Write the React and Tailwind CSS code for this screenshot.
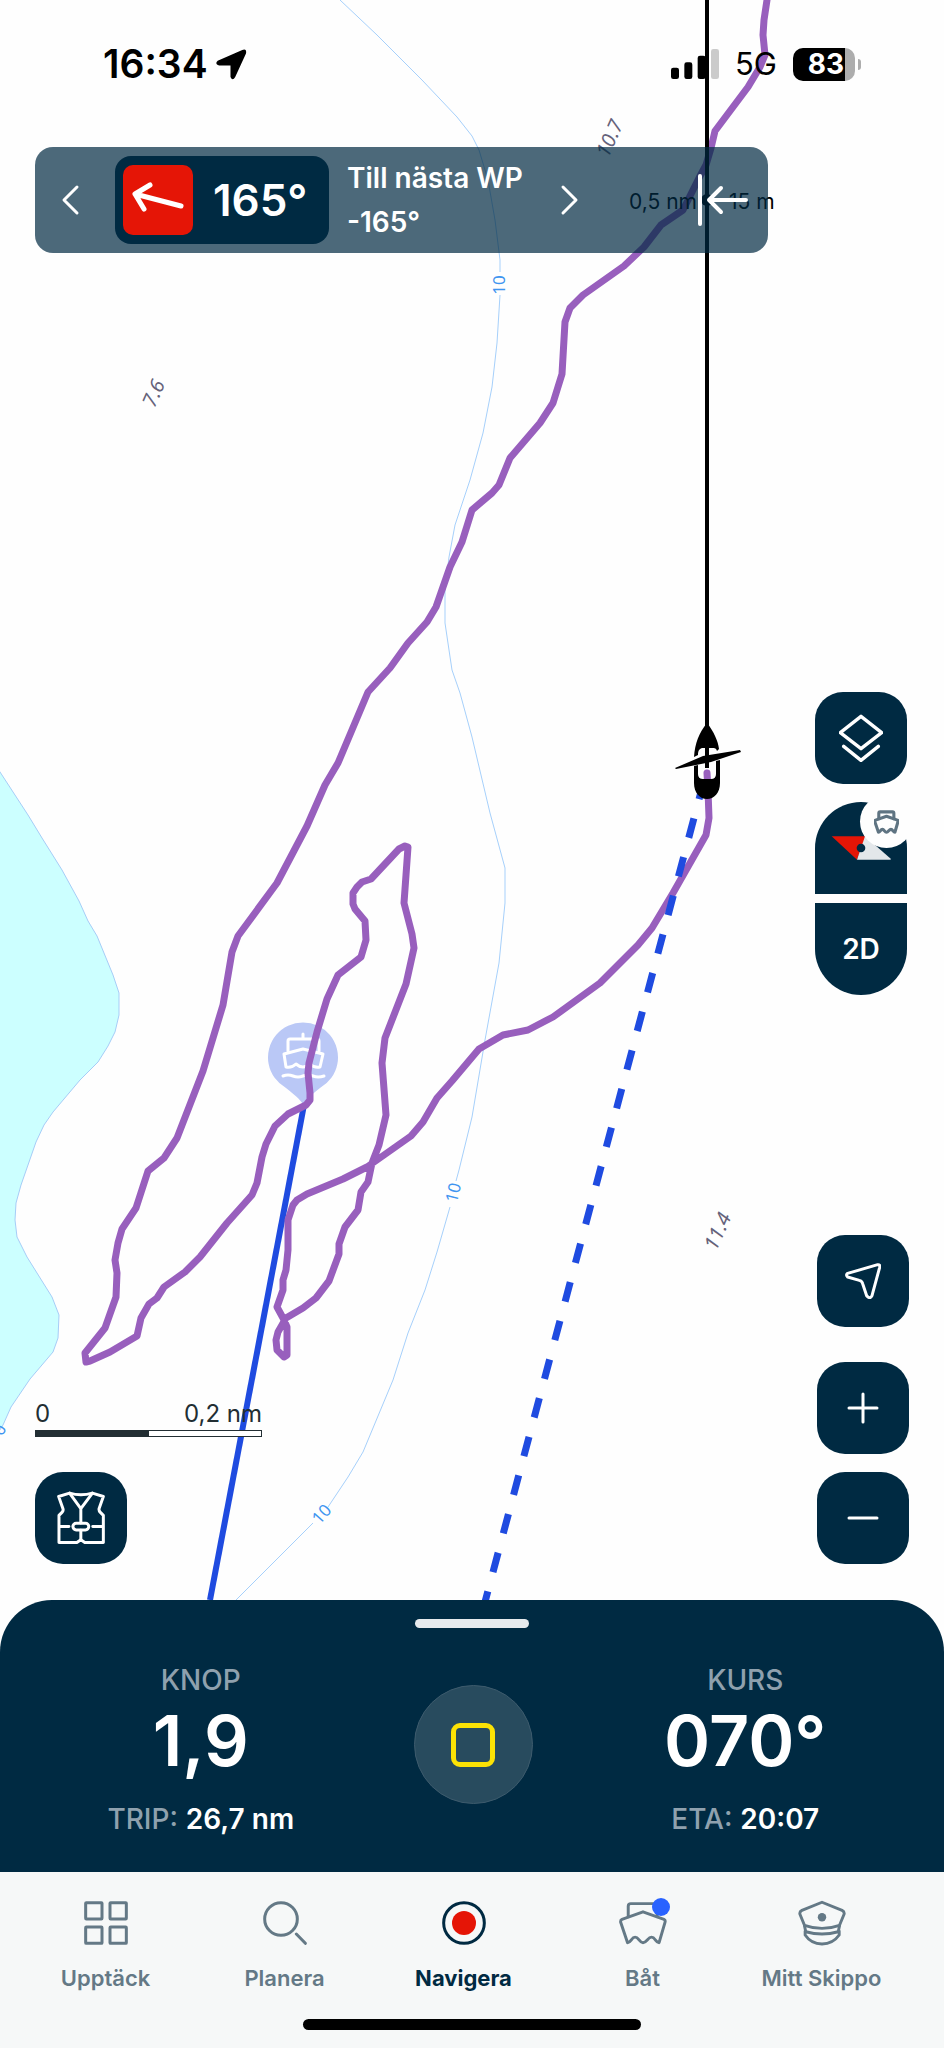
import { clsx } from 'clsx';

const iconProps = {
  fill: 'none',
  stroke: 'currentColor',
  strokeLinecap: 'round',
  strokeLinejoin: 'round',
  'aria-hidden': true,
};

const track =
  'M767 0 764 20 763 35 765 55 760 67 748 87 715 131 711 148 706 165 699 178 683 210 661 225 644 247 624 266 583 295 570 308 565 322 562 374 553 403 540 423 510 458 499 485 492 493 472 510 462 542 450 567 436 607 427 622 408 643 390 668 368 692 338 763 325 785 307 826 277 883 238 936 232 952 223 1005 203 1071 177 1138 164 1158 148 1171 136 1208 122 1229 118 1243 115 1260 117 1273 116 1297 105 1328 85 1353 86 1362 90 1361 110 1352 137 1336 141 1318 149 1304 157 1298 164 1287 185 1272 200 1257 227 1223 252 1195 257 1183 262 1157 266 1144 275 1126 288 1114 306 1105 310 1100 310 1093 308 1073 309 1063 317 1032 327 999 338 975 361 957 366 940 365 921 355 909 353 904 353 893 357 887 362 882 371 879 399 849 405 846 408 847 404 903 412 934 414 948 406 984 385 1038 382 1063 386 1115 379 1145 372 1163 368 1182 361 1192 358 1210 345 1227 339 1244 339 1254 329 1281 316 1298 303 1308 286 1318 278 1332 276 1340 277 1350 284 1357 287 1355 287 1327 283 1318 277 1307 283 1290 283 1280 286 1270 288 1250 288 1220 293 1205 297 1200 307 1194 343 1179 367 1167 411 1136 423 1122 437 1098 452 1081 479 1049 503 1035 528 1030 553 1017 600 983 638 945 652 928 673 893 706 835 709 818 708 790 707 773';

const island =
  'M-4 766 0 772 28 815 42 838 52 854 62 870 79 901 88 921 97 936 113 975 119 993 119 1015 115 1032 108 1046 98 1062 80 1080 53 1112 44 1125 36 1142 21 1185 16 1203 15 1220 17 1237 27 1257 52 1297 59 1315 58 1338 53 1352 30 1379 11 1407 3 1425 -4 1436Z';

function ChartMap() {
  return (
    <svg
      className="absolute inset-0 h-full w-full"
      viewBox="0 0 944 1600"
      preserveAspectRatio="xMidYMin slice"
      role="img"
      aria-label="Sjökort"
    >
      <rect width="944" height="1600" fill="#fefefe" />
      <path d={island} fill="#ccffff" stroke="#a6cdf7" strokeWidth="1" />

      {/* Depth contours */}
      <g fill="none" stroke="#a6d0fb" strokeWidth="1">
        <path d="M340 0 377 35 422 80 457 117 472 136 479 150 488 180 495 220 500 260 500 272" />
        <path d="M500 295 497 343 492 387 483 433 470 480 455 525 449 557 445 590 445 623 449 650 452 670 460 693 472 737 490 813 505 868 505 903 499 963 485 1040 472 1117 459 1170 456 1181" />
        <path d="M450 1207 437 1252 425 1290 408 1333 393 1380 363 1452 348 1477 328 1507" />
        <path d="M313 1523 303 1533 236 1600" />
      </g>
      <g fontFamily='"Noto Sans", sans-serif' fontSize="17" textAnchor="middle" fill="#3f95f0">
        <text transform="translate(505 285) rotate(-90)">10</text>
        <text transform="translate(459 1194) rotate(-76)">10</text>
        <text transform="translate(326 1518) rotate(-48)">10</text>
        <text transform="translate(5 1432) rotate(-70)">0</text>
      </g>
      <g
        fontFamily='"Noto Sans", sans-serif'
        fontSize="20"
        fontStyle="italic"
        textAnchor="middle"
        fill="#65627a"
      >
        <text transform="translate(616 141) rotate(-66)">10.7</text>
        <text transform="translate(160 396) rotate(-66)">7.6</text>
        <text transform="translate(724 1234) rotate(-66)">11.4</text>
      </g>

      {/* Harbour pin */}
      <path
        d="M303 1104 C297 1096 292 1093 286 1088 A35 35 0 1 1 320 1088 C314 1093 309 1096 303 1104Z"
        fill="#bac8f6"
      />
      <g fill="none" stroke="#fff" strokeWidth="3" strokeLinejoin="round" strokeLinecap="round">
        <path d="M303 1034V1039M288 1051V1041Q288 1039 290 1039H317Q319 1039 319 1041V1051" />
        <path d="M284 1054 303 1049 323 1054 320 1067Q314 1068 310 1064 303 1070 296 1064 292 1068 286 1067Z" />
        <path d="M283 1076Q288 1074 293 1076T303 1076 313 1076 324 1076" />
      </g>

      <path d="M304 1105 210 1600" stroke="#1f4be0" strokeWidth="6" />
      <path
        d={track}
        fill="none"
        stroke="#985fbd"
        strokeWidth="7"
        strokeLinejoin="round"
        strokeLinecap="round"
      />
      <path
        d="M706 773 485 1602"
        stroke="#1f4be0"
        strokeWidth="7"
        strokeDasharray="20 20"
        strokeDashoffset="-7"
      />

      {/* Heading line with distance marker */}
      <path d="M707 0V768" stroke="#000" strokeWidth="4" />
      <circle cx="707" cy="200" r="6" />
      <g fontFamily="Inter, sans-serif" fontSize="21">
        <text x="629" y="209">0,5 nm</text>
        <text x="729" y="209">15 m</text>
      </g>

      {/* Own boat */}
      <path d="M707 723C699 733 695 743 694 757L698 755C698 750 700 748 703 748H712C715 748 716 748 717 751L719 749C718 741 714 732 707 723Z" />
      <path d="M694 766 698 765V774Q698 779 703 779H711Q716 779 716 774V761L720 760V783C720 793 714 799 707 799S694 793 694 783Z" />
      <path d="M675 768 703 756 740 750 741 752 711 762 676 769Z" />
      <path d="M707 772V779" stroke="#985fbd" strokeWidth="6" />
    </svg>
  );
}

function StatusBar() {
  return (
    <div className="flex h-32 items-center justify-between pl-[103px] pr-[83px]">
      <div className="flex items-center gap-2 text-[39px] leading-10 font-semibold">
        <span>16:34</span>
        <svg className="h-[31px] w-[31px]" viewBox="0 0 92 92" aria-hidden="true">
          <path d="M78 3Q92-2 89 13L57 83Q49 96 43 83V49H9Q-5 45 5 35Z" />
        </svg>
      </div>
      <div className="flex items-center">
        <svg className="h-[30px] w-12" viewBox="0 0 144 90" aria-hidden="true">
          <rect x="0" y="56" width="24" height="34" rx="7" />
          <rect x="40" y="40" width="24" height="50" rx="7" />
          <rect x="80" y="20" width="24" height="70" rx="7" />
          <rect x="120" y="0" width="24" height="90" rx="7" fill="#000" fillOpacity="0.2" />
        </svg>
        <span className="ml-4 text-[31px] leading-10">5G</span>
        <div className="ml-4 flex h-[33px] w-[62px] items-center justify-center overflow-hidden rounded-[10px] bg-linear-to-r from-black from-84% to-[#adadad] to-84% pl-1 text-[28px] font-bold text-white">
          83
        </div>
        <div className="ml-[3px] h-[11px] w-[3px] rounded-r-full bg-[#adadad]" />
      </div>
    </div>
  );
}

function CourseBar() {
  return (
    <div className="mt-[19px] mr-44 ml-[35px] flex h-[106px] items-center rounded-[18px] bg-[#002a42]/70 pr-5 pl-[26px] text-white">
      <button type="button" aria-label="Föregående" className="shrink-0">
        <svg {...iconProps} className="h-8 w-5" viewBox="0 0 20 32" strokeWidth="3">
          <path d="M16 3 3 16l13 13" />
        </svg>
      </button>
      <div className="ml-[34px] flex h-[88px] w-[214px] shrink-0 items-center rounded-2xl bg-[#002a42] pl-2">
        <div className="flex h-[70px] w-[70px] items-center justify-center rounded-[10px] bg-[#e51506]">
          <svg {...iconProps} className="h-[70px] w-[70px]" viewBox="0 0 70 70" strokeWidth="5">
            <path d="M58 41 12 29M27 20 12 29 21 44" />
          </svg>
        </div>
        <span className="ml-5 text-[44px] font-semibold">165°</span>
      </div>
      <div className="ml-[18px] text-[28px] leading-11 font-semibold whitespace-nowrap">
        <div>Till nästa WP</div>
        <div>-165°</div>
      </div>
      <button type="button" aria-label="Nästa" className="ml-[36px] shrink-0">
        <svg {...iconProps} className="h-8 w-5" viewBox="0 0 20 32" strokeWidth="3">
          <path d="M4 3l13 13L4 29" />
        </svg>
      </button>
      <button type="button" aria-label="Fäll ihop" className="ml-auto shrink-0">
        <svg {...iconProps} className="h-14 w-[52px]" viewBox="0 0 52 56" strokeWidth="4">
          <path d="M4 4V52M50 28H13M25 16 13 28 25 40" />
        </svg>
      </button>
    </div>
  );
}

function MapButton({ label, children }) {
  return (
    <button
      type="button"
      aria-label={label}
      className="flex h-[92px] w-[92px] items-center justify-center rounded-[28px] bg-[#002a42] text-white"
    >
      {children}
    </button>
  );
}

function BoatIcon({ className, strokeWidth = 9 }) {
  return (
    <svg {...iconProps} className={className} viewBox="0 0 146 134" strokeWidth={strokeWidth}>
      <path d="M28 48V16Q28 8 36 8H108Q116 8 116 16V48" />
      <path d="M9 56 73 33 137 56Q142 58 140 65L122 127C112 127 110 110 99 110S84 127 73 127 60 110 49 110 36 127 26 127L5 65Q4 58 9 56Z" />
    </svg>
  );
}

function ScaleBar() {
  return (
    <div className="w-[227px] text-[#222e33]">
      <div className="flex justify-between text-2xl leading-8">
        <span>0</span>
        <span>0,2 nm</span>
      </div>
      <div className="flex h-[7px] border border-[#222e33] bg-white">
        <div className="w-1/2 bg-[#222e33]" />
      </div>
    </div>
  );
}

function MapControls() {
  return (
    <div className="flex flex-1 justify-between pt-[439px] pb-9">
      <div className="flex flex-col justify-end gap-[35px] pl-[35px]">
        <ScaleBar />
        <MapButton label="Flytväst">
          <svg {...iconProps} className="h-[54px] w-12" viewBox="0 0 145 160" strokeWidth="9">
            <path d="M5 15 38 5Q72 15 107 5L140 15 127 52Q126 58 131 63L140 72V154H84L72 146 60 154H6V72L15 63Q20 58 18 52Z" />
            <path d="M38 5 72 52 107 5M72 52V95M72 117V146M8 106H36M108 106H138" />
            <rect x="48" y="96" width="48" height="20" rx="10" />
          </svg>
        </MapButton>
      </div>

      <div className="flex flex-col items-end justify-between pr-[35px]">
        <div className="flex flex-col gap-[18px] pr-[2px]">
          <MapButton label="Kartlager">
            <svg {...iconProps} className="h-12 w-11" viewBox="0 0 132 144" strokeWidth="10">
              <path d="M66 7 128 56 66 104 4 56ZM14 97 66 139 118 97" />
            </svg>
          </MapButton>
          <div className="flex flex-col gap-[9px]">
            <button
              type="button"
              aria-label="Kompass"
              className="relative h-[92px] w-[92px] rounded-t-full bg-[#002a42]"
            >
              <svg className="h-full w-full" viewBox="0 0 276 276" aria-hidden="true">
                <path d="M50 103H152L126 173Z" fill="#e51506" />
                <path d="M150 103 228 171 226 173H126Z" fill="#e3e7ea" />
                <circle cx="138" cy="138" r="13" fill="#002a42" />
              </svg>
              <span className="absolute -top-[7px] -right-[6px] flex h-[53px] w-[53px] items-center justify-center rounded-full bg-[#fefefe] text-[#5f7482]">
                <BoatIcon className="h-6 w-[25px]" strokeWidth={18} />
              </span>
            </button>
            <button
              type="button"
              className="h-[92px] w-[92px] rounded-b-full bg-[#002a42] text-[28px] font-semibold text-white"
            >
              2D
            </button>
          </div>
        </div>

        <div className="flex flex-col gap-[18px]">
          <div className="mb-[17px]">
            <MapButton label="Min position">
              <svg {...iconProps} className="h-9 w-9" viewBox="0 0 108 108" strokeWidth="9">
                <path d="M98 5 8 31Q1 36 8 42L43 52Q51 54 53 62L65 98Q75 110 81 98L104 13Q106 4 98 5Z" />
              </svg>
            </MapButton>
          </div>
          <MapButton label="Zooma in">
            <svg {...iconProps} className="h-8 w-8" viewBox="0 0 32 32" strokeWidth="3">
              <path d="M16 2V30M2 16H30" />
            </svg>
          </MapButton>
          <MapButton label="Zooma ut">
            <svg {...iconProps} className="h-8 w-8" viewBox="0 0 32 32" strokeWidth="3">
              <path d="M2 16H30" />
            </svg>
          </MapButton>
        </div>
      </div>
    </div>
  );
}

function Reading({ label, value, subLabel, subValue }) {
  return (
    <div className="flex flex-1 flex-col items-center">
      <div className="text-[28px] leading-9 font-medium text-[#8fa1ae]">{label}</div>
      <div className="mt-[7px] text-[70px] leading-18 font-semibold text-white">{value}</div>
      <div className="mt-6 text-[28px] leading-9">
        <span className="font-medium text-[#8fa1ae]">{subLabel}</span>{' '}
        <span className="font-semibold text-white">{subValue}</span>
      </div>
    </div>
  );
}

function TripPanel() {
  return (
    <section className="rounded-t-[52px] bg-[#002a42] pt-[19px] pb-[35px]">
      <div className="mx-auto h-[9px] w-[114px] rounded-full bg-[#e6eaed]" />
      <div className="mt-[34px] flex items-start gap-[14px] pl-[2px]">
        <Reading label="KNOP" value="1,9" subLabel="TRIP:" subValue="26,7 nm" />
        <button
          type="button"
          aria-label="Stoppa"
          className="mt-[23px] flex h-[119px] w-[119px] items-center justify-center rounded-full border border-[#3d5b6d] bg-[#284b5e]"
        >
          <span className="h-11 w-11 rounded-[9px] border-5 border-[#fce205]" />
        </button>
        <Reading label="KURS" value="070°" subLabel="ETA:" subValue="20:07" />
      </div>
    </section>
  );
}

const tabs = [
  {
    label: 'Upptäck',
    icon: (
      <svg {...iconProps} className="h-11 w-11" viewBox="0 0 132 132" strokeWidth="9">
        <rect x="5" y="5" width="49" height="49" rx="2" />
        <rect x="78" y="5" width="49" height="49" rx="2" />
        <rect x="5" y="78" width="49" height="49" rx="2" />
        <rect x="78" y="78" width="49" height="49" rx="2" />
      </svg>
    ),
  },
  {
    label: 'Planera',
    icon: (
      <svg {...iconProps} className="h-11 w-11" viewBox="0 0 132 132" strokeWidth="9">
        <circle cx="54" cy="54" r="49" />
        <path d="M100 99 127 127" />
      </svg>
    ),
  },
  {
    label: 'Navigera',
    active: true,
    icon: (
      <svg {...iconProps} className="h-11 w-11" viewBox="0 0 132 132" strokeWidth="9">
        <circle cx="66" cy="66" r="61" />
        <circle cx="66" cy="66" r="36" fill="#e51506" stroke="none" />
      </svg>
    ),
  },
  {
    label: 'Båt',
    icon: (
      <span className="relative">
        <BoatIcon className="h-11 w-12" />
        <span className="absolute -top-[3px] -right-[3px] h-[18px] w-[18px] rounded-full bg-[#2962ff]" />
      </span>
    ),
  },
  {
    label: 'Mitt Skippo',
    icon: (
      <svg {...iconProps} className="h-[46px] w-12" viewBox="0 0 148 140" strokeWidth="9">
        <path d="M74 6 136 31Q144 35 142 43L128 77Q74 96 20 77L6 43Q4 35 12 31Z" />
        <path d="M20 79 24 97Q74 111 124 97L128 79" />
        <path d="M22 95V107Q40 134 74 135 108 134 127 107V95" />
        <circle cx="74" cy="52" r="13" fill="currentColor" stroke="none" />
      </svg>
    ),
  },
];

function TabBar() {
  return (
    <nav className="bg-[#f6f8f8] pt-[29px] pb-[18px]">
      <div className="flex pr-[33px] pl-4">
        {tabs.map((tab) => (
          <a
            key={tab.label}
            href="#"
            aria-current={tab.active ? 'page' : undefined}
            className={clsx(
              'flex flex-1 flex-col items-center gap-[19px] text-[22px] leading-7',
              tab.active ? 'font-bold text-[#002a42]' : 'font-semibold text-[#647986]'
            )}
          >
            <span className="flex h-11 items-center">{tab.icon}</span>
            <span>{tab.label}</span>
          </a>
        ))}
      </div>
      <div className="mx-auto mt-[27px] h-[11px] w-[338px] rounded-full bg-black" />
    </nav>
  );
}

export default function App() {
  return (
    <div className="flex min-h-screen flex-col bg-[#fefefe] font-['Inter',sans-serif] text-black">
      <main className="relative flex flex-1 flex-col">
        <ChartMap />
        <div className="relative flex flex-1 flex-col">
          <StatusBar />
          <CourseBar />
          <MapControls />
        </div>
      </main>
      <TripPanel />
      <TabBar />
    </div>
  );
}
